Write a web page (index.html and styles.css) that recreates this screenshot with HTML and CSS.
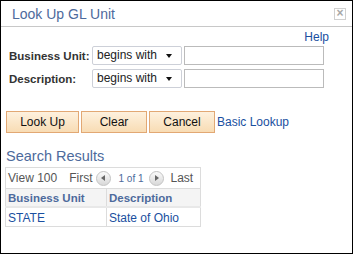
FILE: index.html
```html
<!DOCTYPE html>
<html lang="en">
<head>
  <meta charset="UTF-8">
  <meta name="viewport" content="width=device-width, initial-scale=1.0">
  <title>Look Up GL Unit</title>
  <link rel="stylesheet" href="styles.css">
</head>
<body>

<div class="dialog">
  <div class="titlebar">
    <span class="title">Look Up GL Unit</span>
    <span class="close">&times;</span>
  </div>

  <div class="help-row"><a href="#" class="link">Help</a></div>

  <div class="criteria">
    <label class="field-label">Business Unit:</label>
    <span class="select"><span>begins with</span></span>
    <input type="text" class="text-input">

    <label class="field-label">Description:</label>
    <span class="select"><span>begins with</span></span>
    <input type="text" class="text-input">
  </div>

  <div class="buttons">
    <button class="btn btn-lookup">Look Up</button>
    <button class="btn">Clear</button>
    <button class="btn">Cancel</button>
    <a href="#" class="link basic">Basic Lookup</a>
  </div>

  <h2 class="results-title">Search Results</h2>

  <table class="results">
    <tr class="nav-row">
      <td colspan="2">
        <div class="nav">
          <span>View 100</span>
          <span class="nav-first">First</span>
          <span class="arrow arrow-prev"><span class="tri tri-left"></span></span>
          <span class="count">1 of 1</span>
          <span class="arrow arrow-next"><span class="tri tri-right"></span></span>
          <span>Last</span>
        </div>
      </td>
    </tr>
    <tr class="head-row">
      <th class="col-unit">Business Unit</th>
      <th>Description</th>
    </tr>
    <tr class="data-row">
      <td><a href="#" class="link">STATE</a></td>
      <td><a href="#" class="link">State of Ohio</a></td>
    </tr>
  </table>
</div>

</body>
</html>
```

FILE: styles.css
```css
body {
  margin: 0;
  font-family: "Liberation Sans", Arial, sans-serif;
  background: #fff;
}
.dialog {
  width: 353px;
  height: 254px;
  box-sizing: border-box;
  border: 1px solid #000;
}
.titlebar {
  height: 25px;
  border-bottom: 1px solid #c8c8c8;
  display: flex;
  align-items: flex-start;
  justify-content: space-between;
  padding: 0 6px 0 11px;
}
.title {
  font-size: 14px;
  color: #4d6a9c;
  margin-top: 5px;
}
.close {
  width: 10px;
  height: 10px;
  margin-top: 7px;
  border: 1px solid #d0d0d0;
  color: #a8a8a8;
  font-size: 12px;
  line-height: 9px;
  text-align: center;
  font-weight: bold;
}
.link {
  color: #1a4fa0;
  text-decoration: none;
  font-size: 12px;
}
.help-row {
  text-align: right;
  padding-right: 23px;
  height: 17px;
  line-height: 14px;
  margin-top: 2px;
}
.criteria {
  display: grid;
  grid-template-columns: 81px 90px 140px;
  grid-auto-rows: 19px;
  row-gap: 4px;
  column-gap: 2px;
  padding-left: 8px;
  align-items: center;
}
.field-label {
  font-size: 11.5px;
  font-weight: bold;
  color: #333;
}
.select {
  height: 19px;
  box-sizing: border-box;
  border: 1px solid #cdd0d8;
  border-radius: 2px;
  font-size: 12px;
  color: #222;
  padding-left: 4px;
  line-height: 17px;
  position: relative;
}
.select::after {
  content: "";
  position: absolute;
  right: 9px;
  top: 7px;
  border-left: 3px solid transparent;
  border-right: 3px solid transparent;
  border-top: 4px solid #111;
}
.text-input {
  height: 19px;
  box-sizing: border-box;
  border: 1px solid #bbb;
  margin: 0;
  padding: 0 3px;
}
.buttons {
  display: flex;
  align-items: center;
  gap: 2px;
  margin-top: 23px;
  padding-left: 5px;
}
.btn {
  height: 22px;
  width: 66px;
  margin: 0;
  border: 1px solid #e2a874;
  background: linear-gradient(#fef1de, #f8dcb4);
  font-family: "Liberation Sans", Arial, sans-serif;
  font-size: 12px;
  color: #111;
  padding: 0;
}
.btn-lookup {
  width: 73px;
}
.results-title {
  font-size: 14.5px;
  font-weight: normal;
  color: #4d6a9c;
  margin: 15px 0 0 5px;
  line-height: 17px;
}
.results {
  border-collapse: collapse;
  margin: 2px 0 0 4px;
  width: 196px;
  border: 1px solid #dcdcdc;
}
.results td, .results th {
  border: 1px solid #dcdcdc;
  padding: 0 0 0 2px;
  text-align: left;
}
.nav-row td {
  height: 20px;
  border-bottom: 1px solid #dcdcdc;
}
.nav {
  display: flex;
  align-items: center;
  font-size: 12px;
  color: #555;
  white-space: nowrap;
}
.nav-first {
  margin-left: 12px;
}
.arrow {
  flex-shrink: 0;
  width: 15px;
  height: 15px;
  border-radius: 50%;
  border: 1px solid #c4c4c4;
  background: linear-gradient(#fafafa, #d8d8d8);
  position: relative;
  box-sizing: border-box;
}
.arrow-prev {
  margin: 0 7px 0 4px;
}
.arrow-next {
  margin: 0 7px 0 5px;
}
.tri {
  position: absolute;
  top: 3.5px;
  border-top: 3.5px solid transparent;
  border-bottom: 3.5px solid transparent;
}
.tri-left {
  left: 4px;
  border-right: 4px solid #666;
}
.tri-right {
  left: 5px;
  border-left: 4px solid #666;
}
.count {
  font-size: 10px;
  color: #4d6a9c;
}
.head-row th {
  height: 17px;
  background: #f4f4f4;
  font-size: 11.5px;
  color: #4d6a9c;
  border-bottom: 2px solid #e8e8e8;
}
.col-unit {
  width: 98px;
}
.data-row td {
  height: 17px;
}
```
